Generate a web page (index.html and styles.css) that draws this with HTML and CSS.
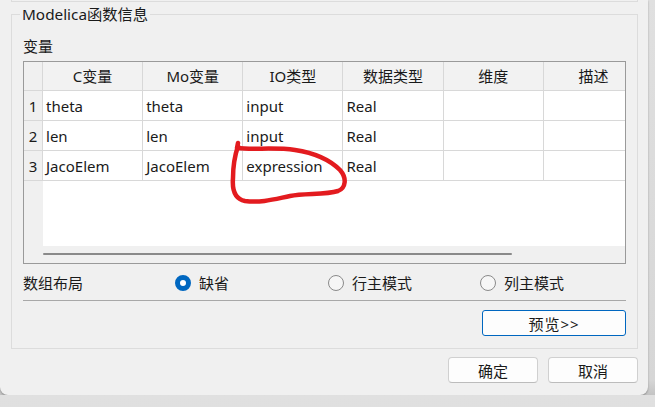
FILE: index.html
```html
<!DOCTYPE html>
<html lang="zh-CN">
  <head>
    <meta charset="UTF-8" />
    <title>Modelica函数信息</title>
    <link rel="stylesheet" href="styles.css">
  </head>
  <body>
    <div class="dialog">
      <div class="prev-group"></div>

      <fieldset class="group">
        <legend>Modelica函数信息</legend>
        <div class="label">变量</div>

        <div class="grid">
          <div class="grid-view">
            <table>
              <thead>
                <tr>
                  <th class="rh"></th>
                  <th>C变量</th>
                  <th>Mo变量</th>
                  <th>IO类型</th>
                  <th>数据类型</th>
                  <th>维度</th>
                  <th>描述</th>
                </tr>
              </thead>
              <tbody>
                <tr>
                  <td class="rh">1</td>
                  <td>theta</td>
                  <td>theta</td>
                  <td>input</td>
                  <td>Real</td>
                  <td></td>
                  <td></td>
                </tr>
                <tr>
                  <td class="rh">2</td>
                  <td>len</td>
                  <td>len</td>
                  <td>input</td>
                  <td>Real</td>
                  <td></td>
                  <td></td>
                </tr>
                <tr>
                  <td class="rh">3</td>
                  <td>JacoElem</td>
                  <td>JacoElem</td>
                  <td>expression</td>
                  <td>Real</td>
                  <td></td>
                  <td></td>
                </tr>
              </tbody>
            </table>
          </div>
          <div class="hscroll"><div class="thumb"></div></div>
        </div>

        <div class="layout-row">
          <span>数组布局</span>
          <label class="radio"><span class="dot checked"></span>缺省</label>
          <label class="radio"><span class="dot"></span>行主模式</label>
          <label class="radio"><span class="dot"></span>列主模式</label>
        </div>

        <div class="sep"></div>

        <div class="preview-row">
          <button class="btn btn-accent">预览&gt;&gt;</button>
        </div>
      </fieldset>

      <div class="footer">
        <button class="btn">确定</button>
        <button class="btn">取消</button>
      </div>

      <!-- 手绘标注 -->
      <svg class="mark" width="655" height="407" viewBox="0 0 655 407">
        <path d="M238,143 L237,148 C253,150 275,147 295,150 C315,153 330,160 340,170 C347,178 346,188 338,191 C325,195 305,193 290,196 C275,199 262,203 245,201 C235,199 232,190 233,178 C233,165 235,155 238,146"
              fill="none" stroke="#e31b1f" stroke-width="4.5" stroke-linecap="round" stroke-linejoin="round" />
      </svg>
    </div>
  </body>
</html>
```

FILE: styles.css
```css
body {
  margin: 0;
  padding: 0;
  font-family: 'Noto Sans', 'Noto Sans CJK SC', sans-serif;
  font-size: 15px;
  color: #1a1a1a;
  background: linear-gradient(to bottom, #e0e0e0 0, #d6d6d6 380px, #c2c2c2 396px, #b9b9b9 407px);
}
.dialog {
  position: relative;
  width: 648px;
  height: 395px;
  box-sizing: border-box;
  padding: 0 10px 0 11px;
  background-color: #f0f0f0;
  border-radius: 0 0 8px 8px;
  box-shadow: 0 1px 2px rgba(0, 0, 0, 0.3);
}
.prev-group {
  height: 1px;
  border: 1px solid #dcdcdc;
  border-top: none;
}
.group {
  margin: 2px 0 0;
  padding: 12px 11px 12px 11px;
  border: 1px solid #dcdcdc;
  min-width: 0;
}
.group legend {
  margin-left: -3px;
  padding: 0 2px;
  line-height: 20px;
  font-size: 15.3px;
}
.label {
  line-height: 20px;
}
.grid {
  margin-top: 5px;
  border: 1px solid #9a9a9a;
  background-color: #fff;
}
.grid-view {
  height: 184px;
  overflow: hidden;
  background: linear-gradient(to right, #f0f0f0 19px, #fff 19px);
}
.grid table {
  table-layout: fixed;
  border-collapse: separate;
  border-spacing: 0;
  width: 620px;
}
.grid th,
.grid td {
  box-sizing: border-box;
  width: 100px;
  height: 30px;
  padding: 0 3px;
  border-right: 1px solid #d8d8d8;
  border-bottom: 1px solid #d8d8d8;
  white-space: nowrap;
  overflow: hidden;
  text-align: left;
  font-weight: normal;
  line-height: 20px;
}
.grid th {
  height: 29px;
  text-align: center;
  background-color: #f2f2f2;
}
.grid td {
  background-color: #fff;
}
.grid .rh {
  width: 19px;
  padding: 0;
  text-align: center;
  background-color: #f0f0f0;
}
.hscroll {
  height: 17px;
  background-color: #f0f0f0;
  padding-left: 19px;
  box-sizing: border-box;
  padding-top: 7px;
}
.hscroll .thumb {
  width: 469px;
  height: 2px;
  border-radius: 1px;
  background-color: #8a8a8a;
}
.layout-row {
  display: grid;
  grid-template-columns: 152px 153px 152px auto;
  align-items: center;
  height: 24px;
  margin-top: 7px;
  line-height: 20px;
}
.radio {
  display: flex;
  align-items: center;
  gap: 8px;
}
.dot {
  width: 14px;
  height: 14px;
  border: 1px solid #8a8a8a;
  border-radius: 50%;
  background-color: #f6f6f6;
}
.dot.checked {
  width: 6px;
  height: 6px;
  border: 5px solid #0067c0;
  background-color: #fff;
}
.sep {
  height: 1px;
  margin-top: 5px;
  background-color: #a8a8a8;
}
.preview-row {
  display: flex;
  justify-content: flex-end;
  margin-top: 9px;
}
.btn {
  height: 26px;
  width: 90px;
  padding: 0;
  font-family: inherit;
  font-size: 15px;
  color: #1a1a1a;
  background-color: #fdfdfd;
  border: 1px solid #d0d0d0;
  border-bottom-color: #bcbcbc;
  border-radius: 4px;
}
.btn-accent {
  width: 144px;
  border: 1px solid #0067c0;
  border-radius: 3px;
  letter-spacing: 1px;
}
.footer {
  display: flex;
  justify-content: flex-end;
  gap: 10px;
  margin-top: 8px;
}
.mark {
  position: absolute;
  top: 0;
  left: 0;
  pointer-events: none;
}
```
